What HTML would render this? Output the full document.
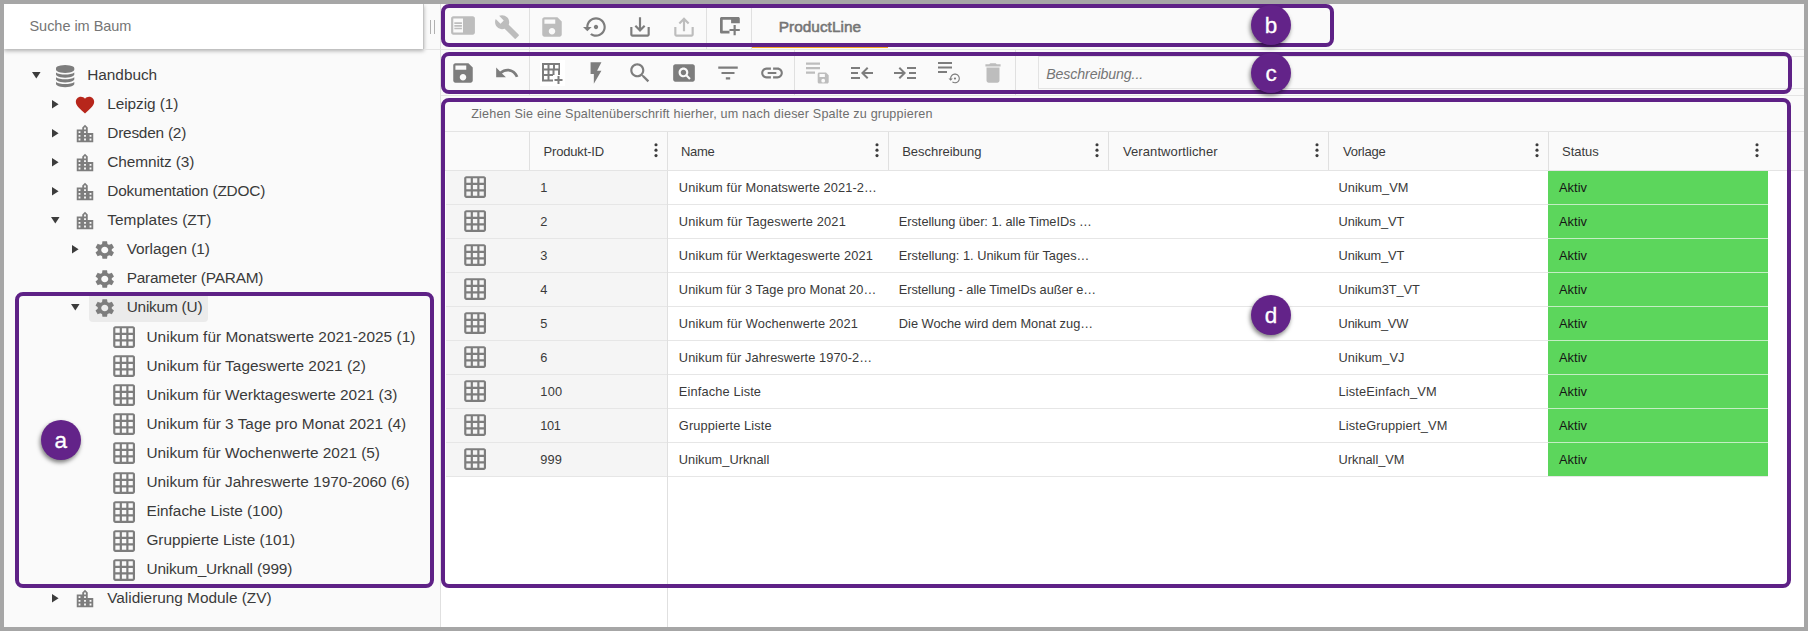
<!DOCTYPE html>
<html lang="de"><head><meta charset="utf-8"><title>ProductLine</title>
<style>
*{box-sizing:border-box;margin:0;padding:0}
html,body{width:1808px;height:631px;overflow:hidden;background:#a6a6a6}
body{font-family:"Liberation Sans",sans-serif;color:#333;position:relative}
#app{position:absolute;left:4px;top:4px;width:1800px;height:623px;background:#fafafa;overflow:hidden}
.abs,.ic,.t{position:absolute}
.ic{display:block;overflow:visible}
.t{white-space:nowrap;line-height:1}
.box{position:absolute;border:4px solid #5e2186;border-radius:8px}
.badge{position:absolute;width:40px;height:40px;border-radius:50%;background:#632389;color:#fff;font-size:22.5px;text-align:center;line-height:41px;box-shadow:-1px 2.5px 4px rgba(0,0,0,.5);-webkit-text-stroke:.3px #fff}
.hl{position:absolute;background:#e4e4e4;height:1px}
.vl{position:absolute;background:#e0e0e0;width:1px}
</style></head><body><div id="app">

<div class="vl" style="left:436px;top:0;height:623px"></div>
<div class="abs" style="left:0;top:0;width:420px;height:45px;background:#fff;box-shadow:0 2px 4px rgba(0,0,0,.3);border-right:1px solid #c4c4c4"></div>
<div class="t" id="search" style="left:25.46px;top:14.53px;font-size:14.5px;color:#757575;letter-spacing:-0.031px;">Suche im Baum</div>
<div class="abs" style="left:426px;top:16px;width:1px;height:13.5px;background:#b0b0b0"></div>
<div class="abs" style="left:430.3px;top:16px;width:1px;height:13.5px;background:#b0b0b0"></div>
<div class="abs" style="left:85.3px;top:288.5px;width:118.6px;height:29.3px;border-radius:4px;background:#ebebeb"></div>
<svg class="ic" style="left:27.5px;top:67.65px" width="8.6" height="6.6" viewBox="0 0 8.6 6.6"><path fill="#3c3c3c" d="M0 0h8.6L4.300 6.600z"/></svg>
<svg class="ic" style="left:51.8px;top:60.75px" width="18.3" height="22.2" viewBox="128 0 1536 1792" preserveAspectRatio="none"><path fill="#7d7d7d" d="M896 768q237 0 443-43t325-127v170q0 69-103 128t-280 93.500-385 34.500-385-34.500-280-93.500-103-128v-170q119 84 325 127t443 43zm0 768q237 0 443-43t325-127v170q0 69-103 128t-280 93.500-385 34.500-385-34.500-280-93.500-103-128v-170q119 84 325 127t443 43zm0-384q237 0 443-43t325-127v170q0 69-103 128t-280 93.500-385 34.500-385-34.500-280-93.500-103-128v-170q119 84 325 127t443 43zm0-1152q208 0 385 34.500t280 93.500 103 128v128q0 69-103 128t-280 93.500-385 34.500-385-34.500-280-93.500-103-128v-128q0-69 103-128t280-93.500 385-34.500z"/></svg>
<div class="t" id="tr0" style="left:83.24px;top:62.51px;font-size:15.4px;color:#3a3a3a;letter-spacing:-0.034px;">Handbuch</div>
<svg class="ic" style="left:48.3px;top:95.71px" width="6.6" height="8.6" viewBox="0 0 6.6 8.6"><path fill="#3c3c3c" d="M0 0v8.600L6.600 4.300z"/></svg>
<svg class="ic" style="left:69.9px;top:89.71px" width="22" height="22" viewBox="0 0 24 24"><path fill="#b7261b" d="M12 21.35l-1.45-1.32C5.4 15.36 2 12.28 2 8.5 2 5.42 4.42 3 7.5 3c1.74 0 3.41.81 4.5 2.09C13.09 3.81 14.76 3 16.5 3 19.58 3 22 5.42 22 8.5c0 3.78-3.4 6.86-8.55 11.54L12 21.35z"/></svg>
<div class="t" id="tr1" style="left:103.24px;top:91.57px;font-size:15.4px;color:#3a3a3a;letter-spacing:-0.079px;">Leipzig (1)</div>
<svg class="ic" style="left:48.3px;top:124.77px" width="6.6" height="8.6" viewBox="0 0 6.6 8.6"><path fill="#3c3c3c" d="M0 0v8.600L6.600 4.300z"/></svg>
<svg class="ic" style="left:70.05px;top:118.77px" width="22" height="22" viewBox="0 0 24 24"><path fill="#7d7d7d" d="M15 11V5l-3-3-3 3v2H3v14h18V11h-6zm-8 8H5v-2h2v2zm0-4H5v-2h2v2zm0-4H5V9h2v2zm6 8h-2v-2h2v2zm0-4h-2v-2h2v2zm0-4h-2V9h2v2zm0-4h-2V5h2v2zm6 12h-2v-2h2v2zm0-4h-2v-2h2v2z"/></svg>
<div class="t" id="tr2" style="left:103.24px;top:120.63px;font-size:15.4px;color:#3a3a3a;letter-spacing:-0.216px;">Dresden (2)</div>
<svg class="ic" style="left:48.3px;top:153.83px" width="6.6" height="8.6" viewBox="0 0 6.6 8.6"><path fill="#3c3c3c" d="M0 0v8.600L6.600 4.300z"/></svg>
<svg class="ic" style="left:70.05px;top:147.83px" width="22" height="22" viewBox="0 0 24 24"><path fill="#7d7d7d" d="M15 11V5l-3-3-3 3v2H3v14h18V11h-6zm-8 8H5v-2h2v2zm0-4H5v-2h2v2zm0-4H5V9h2v2zm6 8h-2v-2h2v2zm0-4h-2v-2h2v2zm0-4h-2V9h2v2zm0-4h-2V5h2v2zm6 12h-2v-2h2v2zm0-4h-2v-2h2v2z"/></svg>
<div class="t" id="tr3" style="left:103.24px;top:149.69px;font-size:15.4px;color:#3a3a3a;letter-spacing:-0.085px;">Chemnitz (3)</div>
<svg class="ic" style="left:48.3px;top:182.89px" width="6.6" height="8.6" viewBox="0 0 6.6 8.6"><path fill="#3c3c3c" d="M0 0v8.600L6.600 4.300z"/></svg>
<svg class="ic" style="left:70.05px;top:176.89px" width="22" height="22" viewBox="0 0 24 24"><path fill="#7d7d7d" d="M15 11V5l-3-3-3 3v2H3v14h18V11h-6zm-8 8H5v-2h2v2zm0-4H5v-2h2v2zm0-4H5V9h2v2zm6 8h-2v-2h2v2zm0-4h-2v-2h2v2zm0-4h-2V9h2v2zm0-4h-2V5h2v2zm6 12h-2v-2h2v2zm0-4h-2v-2h2v2z"/></svg>
<div class="t" id="tr4" style="left:103.24px;top:178.75px;font-size:15.4px;color:#3a3a3a;letter-spacing:-0.184px;">Dokumentation (ZDOC)</div>
<svg class="ic" style="left:47.3px;top:212.95px" width="8.6" height="6.6" viewBox="0 0 8.6 6.6"><path fill="#3c3c3c" d="M0 0h8.6L4.300 6.600z"/></svg>
<svg class="ic" style="left:70.05px;top:205.95px" width="22" height="22" viewBox="0 0 24 24"><path fill="#7d7d7d" d="M15 11V5l-3-3-3 3v2H3v14h18V11h-6zm-8 8H5v-2h2v2zm0-4H5v-2h2v2zm0-4H5V9h2v2zm6 8h-2v-2h2v2zm0-4h-2v-2h2v2zm0-4h-2V9h2v2zm0-4h-2V5h2v2zm6 12h-2v-2h2v2zm0-4h-2v-2h2v2z"/></svg>
<div class="t" id="tr5" style="left:103.24px;top:207.81px;font-size:15.4px;color:#3a3a3a;letter-spacing:0.048px;">Templates (ZT)</div>
<svg class="ic" style="left:68.2px;top:241.01px" width="6.6" height="8.6" viewBox="0 0 6.6 8.6"><path fill="#3c3c3c" d="M0 0v8.600L6.600 4.300z"/></svg>
<svg class="ic" style="left:89.15px;top:235.01px" width="23.500" height="22" viewBox="0 0 24 24" preserveAspectRatio="none"><path fill="#7d7d7d" d="M19.14 12.94c.04-.3.06-.61.06-.94 0-.32-.02-.64-.07-.94l2.030-1.580c.18-.14.23-.41.12-.61l-1.920-3.320c-.12-.22-.37-.29-.59-.22l-2.390.96c-.5-.38-1.030-.7-1.620-.94l-.36-2.540c-.04-.24-.24-.41-.48-.41h-3.840c-.24 0-.43.17-.47.41l-.36 2.540c-.59.24-1.130.57-1.620.94l-2.390-.96c-.22-.08-.47 0-.59.22L2.740 8.870c-.12.21-.08.47.12.61l2.030 1.580c-.05.3-.09.63-.09.94s.02.64.07.94l-2.030 1.580c-.18.14-.23.41-.12.61l1.920 3.320c.12.22.37.29.59.22l2.390-.96c.5.38 1.030.7 1.620.94l.36 2.540c.05.24.24.41.48.41h3.840c.24 0 .44-.17.47-.41l.36-2.540c.59-.24 1.130-.56 1.620-.94l2.390.96c.22.08.47 0 .59-.22l1.920-3.320c.12-.22.07-.47-.12-.61l-2.010-1.580zM12 15.600c-1.980 0-3.600-1.620-3.600-3.600s1.620-3.600 3.600-3.600 3.600 1.620 3.600 3.600-1.620 3.600-3.600 3.600z"/></svg>
<div class="t" id="tr6" style="left:122.65px;top:236.87px;font-size:15.4px;color:#3a3a3a;letter-spacing:-0.053px;">Vorlagen (1)</div>
<svg class="ic" style="left:89.15px;top:264.07px" width="23.500" height="22" viewBox="0 0 24 24" preserveAspectRatio="none"><path fill="#7d7d7d" d="M19.14 12.94c.04-.3.06-.61.06-.94 0-.32-.02-.64-.07-.94l2.030-1.580c.18-.14.23-.41.12-.61l-1.920-3.320c-.12-.22-.37-.29-.59-.22l-2.390.96c-.5-.38-1.030-.7-1.620-.94l-.36-2.540c-.04-.24-.24-.41-.48-.41h-3.840c-.24 0-.43.17-.47.41l-.36 2.540c-.59.24-1.130.57-1.620.94l-2.390-.96c-.22-.08-.47 0-.59.22L2.740 8.870c-.12.21-.08.47.12.61l2.030 1.580c-.05.3-.09.63-.09.94s.02.64.07.94l-2.030 1.580c-.18.14-.23.41-.12.61l1.920 3.320c.12.22.37.29.59.22l2.390-.96c.5.38 1.030.7 1.620.94l.36 2.540c.05.24.24.41.48.41h3.840c.24 0 .44-.17.47-.41l.36-2.540c.59-.24 1.130-.56 1.620-.94l2.390.96c.22.08.47 0 .59-.22l1.920-3.320c.12-.22.07-.47-.12-.61l-2.010-1.580zM12 15.600c-1.980 0-3.600-1.620-3.600-3.600s1.620-3.600 3.600-3.600 3.600 1.620 3.600 3.600-1.620 3.600-3.600 3.600z"/></svg>
<div class="t" id="tr7" style="left:122.65px;top:265.93px;font-size:15.4px;color:#3a3a3a;letter-spacing:-0.196px;">Parameter (PARAM)</div>
<svg class="ic" style="left:67.2px;top:300.13px" width="8.6" height="6.6" viewBox="0 0 8.6 6.6"><path fill="#3c3c3c" d="M0 0h8.6L4.300 6.600z"/></svg>
<svg class="ic" style="left:89.15px;top:293.13px" width="23.500" height="22" viewBox="0 0 24 24" preserveAspectRatio="none"><path fill="#7d7d7d" d="M19.14 12.94c.04-.3.06-.61.06-.94 0-.32-.02-.64-.07-.94l2.030-1.580c.18-.14.23-.41.12-.61l-1.920-3.320c-.12-.22-.37-.29-.59-.22l-2.390.96c-.5-.38-1.030-.7-1.620-.94l-.36-2.540c-.04-.24-.24-.41-.48-.41h-3.840c-.24 0-.43.17-.47.41l-.36 2.540c-.59.24-1.130.57-1.620.94l-2.390-.96c-.22-.08-.47 0-.59.22L2.740 8.870c-.12.21-.08.47.12.61l2.030 1.580c-.05.3-.09.63-.09.94s.02.64.07.94l-2.030 1.580c-.18.14-.23.41-.12.61l1.920 3.320c.12.22.37.29.59.22l2.390-.96c.5.38 1.030.7 1.620.94l.36 2.540c.05.24.24.41.48.41h3.840c.24 0 .44-.17.47-.41l.36-2.540c.59-.24 1.130-.56 1.620-.94l2.390.96c.22.08.47 0 .59-.22l1.920-3.320c.12-.22.07-.47-.12-.61l-2.010-1.580zM12 15.600c-1.980 0-3.600-1.620-3.600-3.600s1.620-3.600 3.600-3.600 3.600 1.620 3.600 3.600-1.620 3.600-3.600 3.600z"/></svg>
<div class="t" id="tr8" style="left:122.65px;top:294.99px;font-size:15.4px;color:#3a3a3a;letter-spacing:-0.209px;">Unikum (U)</div>
<svg class="ic" style="left:106.9px;top:320.0px" width="26.2" height="26.2" viewBox="0 0 24 24"><path fill="#7d7d7d" d="M20 2H4c-1.1 0-2 .9-2 2v16c0 1.1.9 2 2 2h16c1.1 0 2-.9 2-2V4c0-1.1-.9-2-2-2zM8 20H4v-4h4v4zm0-6H4v-4h4v4zm0-6H4V4h4v4zm6 12h-4v-4h4v4zm0-6h-4v-4h4v4zm0-6h-4V4h4v4zm6 12h-4v-4h4v4zm0-6h-4v-4h4v4zm0-6h-4V4h4v4z"/></svg>
<div class="t" id="tr9" style="left:142.44px;top:324.81px;font-size:15.4px;color:#3a3a3a;letter-spacing:0.034px;">Unikum für Monatswerte 2021-2025 (1)</div>
<svg class="ic" style="left:106.9px;top:349.11px" width="26.2" height="26.2" viewBox="0 0 24 24"><path fill="#7d7d7d" d="M20 2H4c-1.1 0-2 .9-2 2v16c0 1.1.9 2 2 2h16c1.1 0 2-.9 2-2V4c0-1.1-.9-2-2-2zM8 20H4v-4h4v4zm0-6H4v-4h4v4zm0-6H4V4h4v4zm6 12h-4v-4h4v4zm0-6h-4v-4h4v4zm0-6h-4V4h4v4zm6 12h-4v-4h4v4zm0-6h-4v-4h4v4zm0-6h-4V4h4v4z"/></svg>
<div class="t" id="tr10" style="left:142.44px;top:353.81px;font-size:15.4px;color:#3a3a3a;letter-spacing:0.023px;">Unikum für Tageswerte 2021 (2)</div>
<svg class="ic" style="left:106.9px;top:378.22px" width="26.2" height="26.2" viewBox="0 0 24 24"><path fill="#7d7d7d" d="M20 2H4c-1.1 0-2 .9-2 2v16c0 1.1.9 2 2 2h16c1.1 0 2-.9 2-2V4c0-1.1-.9-2-2-2zM8 20H4v-4h4v4zm0-6H4v-4h4v4zm0-6H4V4h4v4zm6 12h-4v-4h4v4zm0-6h-4v-4h4v4zm0-6h-4V4h4v4zm6 12h-4v-4h4v4zm0-6h-4v-4h4v4zm0-6h-4V4h4v4z"/></svg>
<div class="t" id="tr11" style="left:142.44px;top:382.81px;font-size:15.4px;color:#3a3a3a;letter-spacing:-0.01px;">Unikum für Werktageswerte 2021 (3)</div>
<svg class="ic" style="left:106.9px;top:407.33px" width="26.2" height="26.2" viewBox="0 0 24 24"><path fill="#7d7d7d" d="M20 2H4c-1.1 0-2 .9-2 2v16c0 1.1.9 2 2 2h16c1.1 0 2-.9 2-2V4c0-1.1-.9-2-2-2zM8 20H4v-4h4v4zm0-6H4v-4h4v4zm0-6H4V4h4v4zm6 12h-4v-4h4v4zm0-6h-4v-4h4v4zm0-6h-4V4h4v4zm6 12h-4v-4h4v4zm0-6h-4v-4h4v4zm0-6h-4V4h4v4z"/></svg>
<div class="t" id="tr12" style="left:142.44px;top:411.81px;font-size:15.4px;color:#3a3a3a;letter-spacing:-0.0px;">Unikum für 3 Tage pro Monat 2021 (4)</div>
<svg class="ic" style="left:106.9px;top:436.44px" width="26.2" height="26.2" viewBox="0 0 24 24"><path fill="#7d7d7d" d="M20 2H4c-1.1 0-2 .9-2 2v16c0 1.1.9 2 2 2h16c1.1 0 2-.9 2-2V4c0-1.1-.9-2-2-2zM8 20H4v-4h4v4zm0-6H4v-4h4v4zm0-6H4V4h4v4zm6 12h-4v-4h4v4zm0-6h-4v-4h4v4zm0-6h-4V4h4v4zm6 12h-4v-4h4v4zm0-6h-4v-4h4v4zm0-6h-4V4h4v4z"/></svg>
<div class="t" id="tr13" style="left:142.44px;top:440.81px;font-size:15.4px;color:#3a3a3a;letter-spacing:-0.018px;">Unikum für Wochenwerte 2021 (5)</div>
<svg class="ic" style="left:106.9px;top:465.55px" width="26.2" height="26.2" viewBox="0 0 24 24"><path fill="#7d7d7d" d="M20 2H4c-1.1 0-2 .9-2 2v16c0 1.1.9 2 2 2h16c1.1 0 2-.9 2-2V4c0-1.1-.9-2-2-2zM8 20H4v-4h4v4zm0-6H4v-4h4v4zm0-6H4V4h4v4zm6 12h-4v-4h4v4zm0-6h-4v-4h4v4zm0-6h-4V4h4v4zm6 12h-4v-4h4v4zm0-6h-4v-4h4v4zm0-6h-4V4h4v4z"/></svg>
<div class="t" id="tr14" style="left:142.44px;top:469.81px;font-size:15.4px;color:#3a3a3a;letter-spacing:-0.005px;">Unikum für Jahreswerte 1970-2060 (6)</div>
<svg class="ic" style="left:106.9px;top:494.66px" width="26.2" height="26.2" viewBox="0 0 24 24"><path fill="#7d7d7d" d="M20 2H4c-1.1 0-2 .9-2 2v16c0 1.1.9 2 2 2h16c1.1 0 2-.9 2-2V4c0-1.1-.9-2-2-2zM8 20H4v-4h4v4zm0-6H4v-4h4v4zm0-6H4V4h4v4zm6 12h-4v-4h4v4zm0-6h-4v-4h4v4zm0-6h-4V4h4v4zm6 12h-4v-4h4v4zm0-6h-4v-4h4v4zm0-6h-4V4h4v4z"/></svg>
<div class="t" id="tr15" style="left:142.44px;top:498.81px;font-size:15.4px;color:#3a3a3a;letter-spacing:-0.025px;">Einfache Liste (100)</div>
<svg class="ic" style="left:106.9px;top:523.77px" width="26.2" height="26.2" viewBox="0 0 24 24"><path fill="#7d7d7d" d="M20 2H4c-1.1 0-2 .9-2 2v16c0 1.1.9 2 2 2h16c1.1 0 2-.9 2-2V4c0-1.1-.9-2-2-2zM8 20H4v-4h4v4zm0-6H4v-4h4v4zm0-6H4V4h4v4zm6 12h-4v-4h4v4zm0-6h-4v-4h4v4zm0-6h-4V4h4v4zm6 12h-4v-4h4v4zm0-6h-4v-4h4v4zm0-6h-4V4h4v4z"/></svg>
<div class="t" id="tr16" style="left:142.44px;top:527.81px;font-size:15.4px;color:#3a3a3a;letter-spacing:-0.044px;">Gruppierte Liste (101)</div>
<svg class="ic" style="left:106.9px;top:552.88px" width="26.2" height="26.2" viewBox="0 0 24 24"><path fill="#7d7d7d" d="M20 2H4c-1.1 0-2 .9-2 2v16c0 1.1.9 2 2 2h16c1.1 0 2-.9 2-2V4c0-1.1-.9-2-2-2zM8 20H4v-4h4v4zm0-6H4v-4h4v4zm0-6H4V4h4v4zm6 12h-4v-4h4v4zm0-6h-4v-4h4v4zm0-6h-4V4h4v4zm6 12h-4v-4h4v4zm0-6h-4v-4h4v4zm0-6h-4V4h4v4z"/></svg>
<div class="t" id="tr17" style="left:142.44px;top:556.81px;font-size:15.4px;color:#3a3a3a;letter-spacing:-0.155px;">Unikum_Urknall (999)</div>
<svg class="ic" style="left:48.3px;top:589.95px" width="6.6" height="8.6" viewBox="0 0 6.6 8.6"><path fill="#3c3c3c" d="M0 0v8.600L6.600 4.300z"/></svg>
<svg class="ic" style="left:70.05px;top:583.95px" width="22" height="22" viewBox="0 0 24 24"><path fill="#7d7d7d" d="M15 11V5l-3-3-3 3v2H3v14h18V11h-6zm-8 8H5v-2h2v2zm0-4H5v-2h2v2zm0-4H5V9h2v2zm6 8h-2v-2h2v2zm0-4h-2v-2h2v2zm0-4h-2V9h2v2zm0-4h-2V5h2v2zm6 12h-2v-2h2v2zm0-4h-2v-2h2v2z"/></svg>
<div class="t" id="tr18" style="left:103.24px;top:585.81px;font-size:15.4px;color:#3a3a3a;letter-spacing:-0.021px;">Validierung Module (ZV)</div>
<div class="hl" style="left:420px;top:45px;width:1380px"></div>
<div class="hl" style="left:437px;top:91px;width:1363px"></div>
<svg class="ic" style="left:445.5px;top:7.6px" width="26" height="26" viewBox="0 0 24 24"><path fill="#bdbdbd" d="M3 4h18c1.1 0 2 .9 2 2v13c0 1.1-.9 2-2 2H3c-1.1 0-2-.9-2-2V6c0-1.1.9-2 2-2zm0 15h9V6H3v13zM4 9.5h7V11H4zm0 2.5h7v1.5H4zm0 2.5h7V16H4z"/></svg>
<svg class="ic" style="left:490.0px;top:9.8px" width="26" height="26" viewBox="0 0 24 24"><path fill="#bdbdbd" d="M22.7 19l-9.1-9.1c.9-2.3.4-5-1.5-6.9-2-2-5-2.4-7.4-1.3L9 6 6 9 1.6 4.7C.4 7.1.9 10.1 2.9 12.1c1.9 1.9 4.6 2.4 6.9 1.5l9.1 9.1c.4.4 1 .4 1.4 0l2.3-2.3c.5-.4.5-1.1.1-1.4z"/></svg>
<svg class="ic" style="left:534.5px;top:10.0px" width="26" height="26" viewBox="0 0 24 24"><path fill="#bdbdbd" d="M17 3H5c-1.11 0-2 .9-2 2v14c0 1.1.89 2 2 2h14c1.1 0 2-.9 2-2V7l-4-4zm-5 16c-1.66 0-3-1.34-3-3s1.34-3 3-3 3 1.34 3 3-1.34 3-3 3zm3-10H5V5h10v4z"/></svg>
<svg class="ic" style="left:578.9px;top:10.0px" width="26" height="26" viewBox="0 0 24 24"><path fill="#7d7d7d" d="M14 12c0-1.1-.9-2-2-2s-2 .9-2 2 .9 2 2 2 2-.9 2-2zm-2-9c-4.97 0-9 4.03-9 9H0l4 4 4-4H5c0-3.87 3.13-7 7-7s7 3.13 7 7-3.13 7-7 7c-1.51 0-2.91-.49-4.06-1.3l-1.42 1.44C8.04 20.3 9.94 21 12 21c4.97 0 9-4.03 9-9s-4.03-9-9-9z"/></svg>
<svg class="ic" style="left:622.5px;top:10.0px" width="26" height="26" viewBox="0 0 24 24"><path fill="#7d7d7d" d="M19 12v7H5v-7H3v7c0 1.1.9 2 2 2h14c1.1 0 2-.9 2-2v-7h-2zm-6 .67l2.59-2.58L17 11.5l-5 5-5-5 1.41-1.41L11 12.67V3h2z"/></svg>
<svg class="ic" style="left:667.0px;top:10.0px" width="26" height="26" viewBox="0 0 24 24"><path fill="#bdbdbd" d="M19 12v7H5v-7H3v7c0 1.1.9 2 2 2h14c1.1 0 2-.9 2-2v-7h-2zM11 6.83L8.41 9.41 7 8l5-5 5 5-1.41 1.41L13 6.83V16h-2z"/></svg>
<svg class="ic" style="left:716.2px;top:13.1px" width="20" height="18.400" viewBox="0 0 20 18.400"><path fill="#7d7d7d" d="M1.600 0h16.600c.9 0 1.600.7 1.600 1.600v4.700h-8.700V2.700H2.700v11.100h6.800v2.700H1.600c-.9 0-1.600-.7-1.600-1.600V1.600C0 .7.700 0 1.600 0zM13.550 8h2.200v3.900h4.050v2.200h-4.050v4.100h-2.200v-4.100H9.500v-2.200h4.050z"/></svg>
<div class="vl" style="left:525px;top:0px;height:45px"></div>
<div class="vl" style="left:702px;top:0px;height:45px"></div>
<div class="vl" style="left:747px;top:0px;height:45px"></div>
<div class="t" id="tab" style="left:774.69px;top:14.66px;font-size:15.4px;color:#757575;letter-spacing:0.026px;-webkit-text-stroke:0.55px #757575;">ProductLine</div>
<div class="abs" style="left:748px;top:42.5px;width:136px;height:1.8px;background:#f5a623"></div>
<svg class="ic" style="left:446.0px;top:56.0px" width="26" height="26" viewBox="0 0 24 24"><path fill="#7d7d7d" d="M17 3H5c-1.11 0-2 .9-2 2v14c0 1.1.89 2 2 2h14c1.1 0 2-.9 2-2V7l-4-4zm-5 16c-1.66 0-3-1.34-3-3s1.34-3 3-3 3 1.34 3 3-1.34 3-3 3zm3-10H5V5h10v4z"/></svg>
<svg class="ic" style="left:490.0px;top:56.0px" width="26" height="26" viewBox="0 0 24 24"><path fill="#7d7d7d" d="M12.5 8c-2.65 0-5.05.99-6.9 2.6L2 7v9h9l-3.62-3.62c1.39-1.16 3.16-1.88 5.12-1.88 3.54 0 6.55 2.31 7.6 5.5l2.37-.78C21.08 11.03 17.15 8 12.5 8z"/></svg>
<div class="abs" style="left:536px;top:56px;width:25px;height:26px;background:#fff"></div>
<svg class="ic" style="left:538px;top:58.5px" width="22" height="22" viewBox="0 0 22 22"><path fill="#7d7d7d" d="M0 0h18v12h-2V7.500h-3.500V12h-2V7.500H7.500V11H11v2H7.500v3.500H11v2H0zM2 2v3.500h3.500V2zm5.500 0v3.500H11V2zm5.500 0v3.500h3.500V2zM2 7.500V11h3.500V7.500zM2 13v3.500h3.500V13zM15.500 13h2v3h3v2h-3v3h-2v-3h-3v-2h3z"/></svg>
<svg class="ic" style="left:578.5px;top:56.0px" width="26" height="26" viewBox="0 0 24 24"><path fill="#7d7d7d" d="M7 2v11h3v9l7-12h-4l4-8z"/></svg>
<svg class="ic" style="left:622.5px;top:56.0px" width="26" height="26" viewBox="0 0 24 24"><path fill="#7d7d7d" d="M15.5 14h-.79l-.28-.27C15.41 12.59 16 11.11 16 9.5 16 5.91 13.09 3 9.5 3S3 5.91 3 9.5 5.91 16 9.5 16c1.61 0 3.09-.59 4.23-1.57l.27.28v.79l5 4.99L20.49 19l-4.99-5zm-6 0C7.01 14 5 11.99 5 9.5S7.01 5 9.5 5 14 7.01 14 9.5 11.99 14 9.5 14z"/></svg>
<svg class="ic" style="left:667.0px;top:56.0px" width="26" height="26" viewBox="0 0 24 24"><path fill="#7d7d7d" d="M11.5 9C10.12 9 9 10.12 9 11.5s1.12 2.5 2.5 2.5 2.5-1.12 2.5-2.5S12.88 9 11.5 9zM20 4H4c-1.1 0-2 .9-2 2v12c0 1.1.9 2 2 2h16c1.1 0 2-.9 2-2V6c0-1.1-.9-2-2-2zm-3.21 14.21l-2.91-2.91c-.69.44-1.51.7-2.39.7C9.01 16 7 13.99 7 11.5S9.01 7 11.5 7 16 9.01 16 11.5c0 .88-.26 1.69-.7 2.39l2.91 2.9-1.42 1.42z"/></svg>
<svg class="ic" style="left:710.5px;top:56.0px" width="26" height="26" viewBox="0 0 24 24"><path fill="#7d7d7d" d="M10 18h4v-2h-4v2zM3 6v2h18V6H3zm3 7h12v-2H6v2z"/></svg>
<svg class="ic" style="left:754.5px;top:56.0px" width="26" height="26" viewBox="0 0 24 24"><path fill="#7d7d7d" d="M3.9 12c0-1.71 1.39-3.1 3.1-3.1h4V7H7c-2.76 0-5 2.24-5 5s2.24 5 5 5h4v-1.9H7c-1.71 0-3.1-1.39-3.1-3.1zM8 13h8v-2H8v2zm9-6h-4v1.9h4c1.71 0 3.1 1.39 3.1 3.1s-1.39 3.1-3.1 3.1h-4V17h4c2.76 0 5-2.24 5-5s-2.24-5-5-5z"/></svg>
<div class="vl" style="left:525px;top:46px;height:45px"></div>
<div class="vl" style="left:790px;top:46px;height:45px"></div>
<div class="vl" style="left:1011px;top:46px;height:45px"></div>
<svg class="ic" style="left:801px;top:57px" width="26" height="24" viewBox="0 0 26 24"><path fill="#bdbdbd" d="M1 1.500h14v2.200H1zm0 4.500h14v2.200H1zm0 4.500h9v2.200H1zM14.200 11.600h6.800l2.700 2.700v6.800c0 .8-.7 1.500-1.500 1.500h-8c-.8 0-1.500-.7-1.500-1.500v-8c0-.8.700-1.500 1.500-1.500zm.300 1.500v2.800h5.400v-2.800zm3.700 4.700a1.900 1.900 0 100 3.800 1.900 1.900 0 000-3.800z"/></svg>
<svg class="ic" style="left:846px;top:61px" width="24" height="16" viewBox="0 0 24 16"><path fill="#7d7d7d" d="M1 2h9v2H1zm0 5h7v2H1zm0 5h9v2H1zM23 7H14.800l3.600-3.600L17 2l-6 6 6 6 1.400-1.400L14.800 9H23z"/></svg>
<svg class="ic" style="left:889px;top:61px" width="24" height="16" viewBox="0 0 24 16"><path fill="#7d7d7d" d="M14 2h9v2h-9zm2 5h7v2h-7zm-2 5h9v2h-9zM1 7h8.200L5.600 3.400 7 2l6 6-6 6-1.400-1.400L9.200 9H1z"/></svg>
<svg class="ic" style="left:933px;top:57px" width="26" height="24" viewBox="0 0 26 24"><path fill="#7d7d7d" d="M1 1h14v2H1zm0 4.500h14v2H1zm0 4.500h9v2H1z"/><g transform="translate(11.500,11) scale(0.54)"><path fill="#7d7d7d" d="M14 12c0-1.1-.9-2-2-2s-2 .9-2 2 .9 2 2 2 2-.9 2-2zm-2-9c-4.97 0-9 4.03-9 9H0l4 4 4-4H5c0-3.87 3.13-7 7-7s7 3.13 7 7-3.13 7-7 7c-1.51 0-2.91-.49-4.06-1.3l-1.42 1.44C8.04 20.3 9.94 21 12 21c4.97 0 9-4.03 9-9s-4.03-9-9-9z"/></g></svg>
<svg class="ic" style="left:975.5px;top:56.0px" width="26" height="26" viewBox="0 0 24 24"><path fill="#bdbdbd" d="M6 19c0 1.1.9 2 2 2h8c1.1 0 2-.9 2-2V7H6v12zM19 4h-3.5l-1-1h-5l-1 1H5v2h14V4z"/></svg>
<div class="abs" style="left:1034px;top:52px;width:780px;height:33px;border:1px solid #e3e3e3;background:#fafafa"></div>
<div class="t" id="desc" style="left:1042.13px;top:62.78px;font-size:14.2px;color:#757575;letter-spacing:-0.107px;font-style:italic;">Beschreibung...</div>
<div class="t" id="hint" style="left:467.22px;top:104.23px;font-size:12.6px;color:#6e6e6e;letter-spacing:0.178px;">Ziehen Sie eine Spaltenüberschrift hierher, um nach dieser Spalte zu gruppieren</div>
<div class="hl" style="left:437px;top:127px;width:1363px"></div>
<div class="hl" style="left:437px;top:166px;width:1363px"></div>
<div class="abs" style="left:437px;top:167px;width:1363px;height:456px;background:#fff"></div>
<div class="vl" style="left:525px;top:128px;height:38px"></div>
<div class="t" id="h1" style="left:539.5px;top:140.9px;font-size:13px;color:#3a3a3a;letter-spacing:-0.164px;">Produkt-ID</div>
<svg class="ic" style="left:649.8px;top:138.9px" width="4" height="14.300" viewBox="0 0 4 14.300"><g fill="#3c3c3c"><circle cx="2" cy="1.700" r="1.550"/><circle cx="2" cy="7.150" r="1.550"/><circle cx="2" cy="12.600" r="1.550"/></g></svg>
<div class="vl" style="left:663px;top:128px;height:38px"></div>
<div class="t" id="h2" style="left:676.96px;top:140.9px;font-size:13px;color:#3a3a3a;letter-spacing:-0.26px;">Name</div>
<svg class="ic" style="left:870.8px;top:138.9px" width="4" height="14.300" viewBox="0 0 4 14.300"><g fill="#3c3c3c"><circle cx="2" cy="1.700" r="1.550"/><circle cx="2" cy="7.150" r="1.550"/><circle cx="2" cy="12.600" r="1.550"/></g></svg>
<div class="vl" style="left:884px;top:128px;height:38px"></div>
<div class="t" id="h3" style="left:898.17px;top:140.9px;font-size:13px;color:#3a3a3a;letter-spacing:-0.022px;">Beschreibung</div>
<svg class="ic" style="left:1090.8px;top:138.9px" width="4" height="14.300" viewBox="0 0 4 14.300"><g fill="#3c3c3c"><circle cx="2" cy="1.700" r="1.550"/><circle cx="2" cy="7.150" r="1.550"/><circle cx="2" cy="12.600" r="1.550"/></g></svg>
<div class="vl" style="left:1104px;top:128px;height:38px"></div>
<div class="t" id="h4" style="left:1118.96px;top:140.9px;font-size:13px;color:#3a3a3a;letter-spacing:0.091px;">Verantwortlicher</div>
<svg class="ic" style="left:1310.8px;top:138.9px" width="4" height="14.300" viewBox="0 0 4 14.300"><g fill="#3c3c3c"><circle cx="2" cy="1.700" r="1.550"/><circle cx="2" cy="7.150" r="1.550"/><circle cx="2" cy="12.600" r="1.550"/></g></svg>
<div class="vl" style="left:1324px;top:128px;height:38px"></div>
<div class="t" id="h5" style="left:1338.96px;top:140.9px;font-size:13px;color:#3a3a3a;letter-spacing:-0.205px;">Vorlage</div>
<svg class="ic" style="left:1530.8px;top:138.9px" width="4" height="14.300" viewBox="0 0 4 14.300"><g fill="#3c3c3c"><circle cx="2" cy="1.700" r="1.550"/><circle cx="2" cy="7.150" r="1.550"/><circle cx="2" cy="12.600" r="1.550"/></g></svg>
<div class="vl" style="left:1544px;top:128px;height:38px"></div>
<div class="t" id="h6" style="left:1558.06px;top:140.9px;font-size:13px;color:#3a3a3a;letter-spacing:-0.04px;">Status</div>
<svg class="ic" style="left:1750.8px;top:138.9px" width="4" height="14.300" viewBox="0 0 4 14.300"><g fill="#3c3c3c"><circle cx="2" cy="1.700" r="1.550"/><circle cx="2" cy="7.150" r="1.550"/><circle cx="2" cy="12.600" r="1.550"/></g></svg>
<div class="abs" style="left:442px;top:167px;width:221px;height:33px;background:#f5f5f5"></div>
<div class="abs" style="left:1544px;top:167px;width:220px;height:33px;background:#5cd65c"></div>
<div class="hl" style="left:442px;top:200px;width:1322px;background:#e6e6e6"></div>
<div class="hl" style="left:1544px;top:200px;width:220px;background:#c4eec4"></div>
<svg class="ic" style="left:457.95px;top:169.6px" width="26.2" height="26.2" viewBox="0 0 24 24"><path fill="#7d7d7d" d="M20 2H4c-1.1 0-2 .9-2 2v16c0 1.1.9 2 2 2h16c1.1 0 2-.9 2-2V4c0-1.1-.9-2-2-2zM8 20H4v-4h4v4zm0-6H4v-4h4v4zm0-6H4V4h4v4zm6 12h-4v-4h4v4zm0-6h-4v-4h4v4zm0-6h-4V4h4v4zm6 12h-4v-4h4v4zm0-6h-4v-4h4v4zm0-6h-4V4h4v4z"/></svg>
<div class="t" id="p0" style="left:536.3px;top:178.16px;font-size:12.8px;color:#3a3a3a;">1</div>
<div class="t" id="n0" style="left:674.86px;top:178.16px;font-size:12.8px;color:#3a3a3a;letter-spacing:0.107px;">Unikum für Monatswerte 2021-2…</div>
<div class="t" id="v0" style="left:1334.59px;top:178.16px;font-size:12.8px;color:#3a3a3a;letter-spacing:0.024px;">Unikum_VM</div>
<div class="t" id="s0" style="left:1554.89px;top:178.16px;font-size:12.8px;color:#151515;letter-spacing:0.101px;">Aktiv</div>
<div class="abs" style="left:442px;top:201px;width:221px;height:33px;background:#f5f5f5"></div>
<div class="abs" style="left:1544px;top:201px;width:220px;height:33px;background:#5cd65c"></div>
<div class="hl" style="left:442px;top:234px;width:1322px;background:#e6e6e6"></div>
<div class="hl" style="left:1544px;top:234px;width:220px;background:#c4eec4"></div>
<svg class="ic" style="left:457.95px;top:203.6px" width="26.2" height="26.2" viewBox="0 0 24 24"><path fill="#7d7d7d" d="M20 2H4c-1.1 0-2 .9-2 2v16c0 1.1.9 2 2 2h16c1.1 0 2-.9 2-2V4c0-1.1-.9-2-2-2zM8 20H4v-4h4v4zm0-6H4v-4h4v4zm0-6H4V4h4v4zm6 12h-4v-4h4v4zm0-6h-4v-4h4v4zm0-6h-4V4h4v4zm6 12h-4v-4h4v4zm0-6h-4v-4h4v4zm0-6h-4V4h4v4z"/></svg>
<div class="t" id="p1" style="left:536.3px;top:212.16px;font-size:12.8px;color:#3a3a3a;">2</div>
<div class="t" id="n1" style="left:674.86px;top:212.16px;font-size:12.8px;color:#3a3a3a;letter-spacing:0.17px;">Unikum für Tageswerte 2021</div>
<div class="t" id="d1" style="left:894.77px;top:212.16px;font-size:12.8px;color:#3a3a3a;letter-spacing:-0.032px;">Erstellung über: 1. alle TimeIDs …</div>
<div class="t" id="v1" style="left:1334.59px;top:212.16px;font-size:12.8px;color:#3a3a3a;letter-spacing:-0.142px;">Unikum_VT</div>
<div class="t" id="s1" style="left:1554.89px;top:212.16px;font-size:12.8px;color:#151515;letter-spacing:0.101px;">Aktiv</div>
<div class="abs" style="left:442px;top:235px;width:221px;height:33px;background:#f5f5f5"></div>
<div class="abs" style="left:1544px;top:235px;width:220px;height:33px;background:#5cd65c"></div>
<div class="hl" style="left:442px;top:268px;width:1322px;background:#e6e6e6"></div>
<div class="hl" style="left:1544px;top:268px;width:220px;background:#c4eec4"></div>
<svg class="ic" style="left:457.95px;top:237.6px" width="26.2" height="26.2" viewBox="0 0 24 24"><path fill="#7d7d7d" d="M20 2H4c-1.1 0-2 .9-2 2v16c0 1.1.9 2 2 2h16c1.1 0 2-.9 2-2V4c0-1.1-.9-2-2-2zM8 20H4v-4h4v4zm0-6H4v-4h4v4zm0-6H4V4h4v4zm6 12h-4v-4h4v4zm0-6h-4v-4h4v4zm0-6h-4V4h4v4zm6 12h-4v-4h4v4zm0-6h-4v-4h4v4zm0-6h-4V4h4v4z"/></svg>
<div class="t" id="p2" style="left:536.3px;top:246.16px;font-size:12.8px;color:#3a3a3a;">3</div>
<div class="t" id="n2" style="left:674.86px;top:246.16px;font-size:12.8px;color:#3a3a3a;letter-spacing:0.152px;">Unikum für Werktageswerte 2021</div>
<div class="t" id="d2" style="left:894.77px;top:246.16px;font-size:12.8px;color:#3a3a3a;letter-spacing:0.008px;">Erstellung: 1. Unikum für Tages…</div>
<div class="t" id="v2" style="left:1334.59px;top:246.16px;font-size:12.8px;color:#3a3a3a;letter-spacing:-0.142px;">Unikum_VT</div>
<div class="t" id="s2" style="left:1554.89px;top:246.16px;font-size:12.8px;color:#151515;letter-spacing:0.101px;">Aktiv</div>
<div class="abs" style="left:442px;top:269px;width:221px;height:33px;background:#f5f5f5"></div>
<div class="abs" style="left:1544px;top:269px;width:220px;height:33px;background:#5cd65c"></div>
<div class="hl" style="left:442px;top:302px;width:1322px;background:#e6e6e6"></div>
<div class="hl" style="left:1544px;top:302px;width:220px;background:#c4eec4"></div>
<svg class="ic" style="left:457.95px;top:271.6px" width="26.2" height="26.2" viewBox="0 0 24 24"><path fill="#7d7d7d" d="M20 2H4c-1.1 0-2 .9-2 2v16c0 1.1.9 2 2 2h16c1.1 0 2-.9 2-2V4c0-1.1-.9-2-2-2zM8 20H4v-4h4v4zm0-6H4v-4h4v4zm0-6H4V4h4v4zm6 12h-4v-4h4v4zm0-6h-4v-4h4v4zm0-6h-4V4h4v4zm6 12h-4v-4h4v4zm0-6h-4v-4h4v4zm0-6h-4V4h4v4z"/></svg>
<div class="t" id="p3" style="left:536.3px;top:280.16px;font-size:12.8px;color:#3a3a3a;">4</div>
<div class="t" id="n3" style="left:674.86px;top:280.16px;font-size:12.8px;color:#3a3a3a;letter-spacing:0.067px;">Unikum für 3 Tage pro Monat 20…</div>
<div class="t" id="d3" style="left:894.77px;top:280.16px;font-size:12.8px;color:#3a3a3a;letter-spacing:-0.055px;">Erstellung - alle TimeIDs außer e…</div>
<div class="t" id="v3" style="left:1334.59px;top:280.16px;font-size:12.8px;color:#3a3a3a;letter-spacing:-0.054px;">Unikum3T_VT</div>
<div class="t" id="s3" style="left:1554.89px;top:280.16px;font-size:12.8px;color:#151515;letter-spacing:0.101px;">Aktiv</div>
<div class="abs" style="left:442px;top:303px;width:221px;height:33px;background:#f5f5f5"></div>
<div class="abs" style="left:1544px;top:303px;width:220px;height:33px;background:#5cd65c"></div>
<div class="hl" style="left:442px;top:336px;width:1322px;background:#e6e6e6"></div>
<div class="hl" style="left:1544px;top:336px;width:220px;background:#c4eec4"></div>
<svg class="ic" style="left:457.95px;top:305.6px" width="26.2" height="26.2" viewBox="0 0 24 24"><path fill="#7d7d7d" d="M20 2H4c-1.1 0-2 .9-2 2v16c0 1.1.9 2 2 2h16c1.1 0 2-.9 2-2V4c0-1.1-.9-2-2-2zM8 20H4v-4h4v4zm0-6H4v-4h4v4zm0-6H4V4h4v4zm6 12h-4v-4h4v4zm0-6h-4v-4h4v4zm0-6h-4V4h4v4zm6 12h-4v-4h4v4zm0-6h-4v-4h4v4zm0-6h-4V4h4v4z"/></svg>
<div class="t" id="p4" style="left:536.3px;top:314.16px;font-size:12.8px;color:#3a3a3a;">5</div>
<div class="t" id="n4" style="left:674.86px;top:314.16px;font-size:12.8px;color:#3a3a3a;letter-spacing:0.137px;">Unikum für Wochenwerte 2021</div>
<div class="t" id="d4" style="left:894.77px;top:314.16px;font-size:12.8px;color:#3a3a3a;letter-spacing:0.013px;">Die Woche wird dem Monat zug…</div>
<div class="t" id="v4" style="left:1334.59px;top:314.16px;font-size:12.8px;color:#3a3a3a;letter-spacing:-0.173px;">Unikum_VW</div>
<div class="t" id="s4" style="left:1554.89px;top:314.16px;font-size:12.8px;color:#151515;letter-spacing:0.101px;">Aktiv</div>
<div class="abs" style="left:442px;top:337px;width:221px;height:33px;background:#f5f5f5"></div>
<div class="abs" style="left:1544px;top:337px;width:220px;height:33px;background:#5cd65c"></div>
<div class="hl" style="left:442px;top:370px;width:1322px;background:#e6e6e6"></div>
<div class="hl" style="left:1544px;top:370px;width:220px;background:#c4eec4"></div>
<svg class="ic" style="left:457.95px;top:339.6px" width="26.2" height="26.2" viewBox="0 0 24 24"><path fill="#7d7d7d" d="M20 2H4c-1.1 0-2 .9-2 2v16c0 1.1.9 2 2 2h16c1.1 0 2-.9 2-2V4c0-1.1-.9-2-2-2zM8 20H4v-4h4v4zm0-6H4v-4h4v4zm0-6H4V4h4v4zm6 12h-4v-4h4v4zm0-6h-4v-4h4v4zm0-6h-4V4h4v4zm6 12h-4v-4h4v4zm0-6h-4v-4h4v4zm0-6h-4V4h4v4z"/></svg>
<div class="t" id="p5" style="left:536.3px;top:348.16px;font-size:12.8px;color:#3a3a3a;">6</div>
<div class="t" id="n5" style="left:674.86px;top:348.16px;font-size:12.8px;color:#3a3a3a;letter-spacing:0.065px;">Unikum für Jahreswerte 1970-2…</div>
<div class="t" id="v5" style="left:1334.59px;top:348.16px;font-size:12.8px;color:#3a3a3a;letter-spacing:0.053px;">Unikum_VJ</div>
<div class="t" id="s5" style="left:1554.89px;top:348.16px;font-size:12.8px;color:#151515;letter-spacing:0.101px;">Aktiv</div>
<div class="abs" style="left:442px;top:371px;width:221px;height:33px;background:#f5f5f5"></div>
<div class="abs" style="left:1544px;top:371px;width:220px;height:33px;background:#5cd65c"></div>
<div class="hl" style="left:442px;top:404px;width:1322px;background:#e6e6e6"></div>
<div class="hl" style="left:1544px;top:404px;width:220px;background:#c4eec4"></div>
<svg class="ic" style="left:457.95px;top:373.6px" width="26.2" height="26.2" viewBox="0 0 24 24"><path fill="#7d7d7d" d="M20 2H4c-1.1 0-2 .9-2 2v16c0 1.1.9 2 2 2h16c1.1 0 2-.9 2-2V4c0-1.1-.9-2-2-2zM8 20H4v-4h4v4zm0-6H4v-4h4v4zm0-6H4V4h4v4zm6 12h-4v-4h4v4zm0-6h-4v-4h4v4zm0-6h-4V4h4v4zm6 12h-4v-4h4v4zm0-6h-4v-4h4v4zm0-6h-4V4h4v4z"/></svg>
<div class="t" id="p6" style="left:536.3px;top:382.16px;font-size:12.8px;color:#3a3a3a;letter-spacing:0.221px;">100</div>
<div class="t" id="n6" style="left:674.86px;top:382.16px;font-size:12.8px;color:#3a3a3a;letter-spacing:0.133px;">Einfache Liste</div>
<div class="t" id="v6" style="left:1334.59px;top:382.16px;font-size:12.8px;color:#3a3a3a;letter-spacing:0.14px;">ListeEinfach_VM</div>
<div class="t" id="s6" style="left:1554.89px;top:382.16px;font-size:12.8px;color:#151515;letter-spacing:0.101px;">Aktiv</div>
<div class="abs" style="left:442px;top:405px;width:221px;height:33px;background:#f5f5f5"></div>
<div class="abs" style="left:1544px;top:405px;width:220px;height:33px;background:#5cd65c"></div>
<div class="hl" style="left:442px;top:438px;width:1322px;background:#e6e6e6"></div>
<div class="hl" style="left:1544px;top:438px;width:220px;background:#c4eec4"></div>
<svg class="ic" style="left:457.95px;top:407.6px" width="26.2" height="26.2" viewBox="0 0 24 24"><path fill="#7d7d7d" d="M20 2H4c-1.1 0-2 .9-2 2v16c0 1.1.9 2 2 2h16c1.1 0 2-.9 2-2V4c0-1.1-.9-2-2-2zM8 20H4v-4h4v4zm0-6H4v-4h4v4zm0-6H4V4h4v4zm6 12h-4v-4h4v4zm0-6h-4v-4h4v4zm0-6h-4V4h4v4zm6 12h-4v-4h4v4zm0-6h-4v-4h4v4zm0-6h-4V4h4v4z"/></svg>
<div class="t" id="p7" style="left:536.3px;top:416.16px;font-size:12.8px;color:#3a3a3a;letter-spacing:-0.351px;">101</div>
<div class="t" id="n7" style="left:674.86px;top:416.16px;font-size:12.8px;color:#3a3a3a;letter-spacing:0.108px;">Gruppierte Liste</div>
<div class="t" id="v7" style="left:1334.59px;top:416.16px;font-size:12.8px;color:#3a3a3a;letter-spacing:0.13px;">ListeGruppiert_VM</div>
<div class="t" id="s7" style="left:1554.89px;top:416.16px;font-size:12.8px;color:#151515;letter-spacing:0.101px;">Aktiv</div>
<div class="abs" style="left:442px;top:439px;width:221px;height:33px;background:#f5f5f5"></div>
<div class="abs" style="left:1544px;top:439px;width:220px;height:33px;background:#5cd65c"></div>
<div class="hl" style="left:442px;top:472px;width:1322px;background:#e6e6e6"></div>
<svg class="ic" style="left:457.95px;top:441.6px" width="26.2" height="26.2" viewBox="0 0 24 24"><path fill="#7d7d7d" d="M20 2H4c-1.1 0-2 .9-2 2v16c0 1.1.9 2 2 2h16c1.1 0 2-.9 2-2V4c0-1.1-.9-2-2-2zM8 20H4v-4h4v4zm0-6H4v-4h4v4zm0-6H4V4h4v4zm6 12h-4v-4h4v4zm0-6h-4v-4h4v4zm0-6h-4V4h4v4zm6 12h-4v-4h4v4zm0-6h-4v-4h4v4zm0-6h-4V4h4v4z"/></svg>
<div class="t" id="p8" style="left:536.3px;top:450.16px;font-size:12.8px;color:#3a3a3a;letter-spacing:0.108px;">999</div>
<div class="t" id="n8" style="left:674.86px;top:450.16px;font-size:12.8px;color:#3a3a3a;letter-spacing:0.009px;">Unikum_Urknall</div>
<div class="t" id="v8" style="left:1334.59px;top:450.16px;font-size:12.8px;color:#3a3a3a;letter-spacing:-0.027px;">Urknall_VM</div>
<div class="t" id="s8" style="left:1554.89px;top:450.16px;font-size:12.8px;color:#151515;letter-spacing:0.101px;">Aktiv</div>
<div class="vl" style="left:663px;top:167px;height:456px"></div>
<div class="box" style="left:11px;top:288px;width:419px;height:296px"></div>
<div class="box" style="left:437px;top:0px;width:893px;height:43px"></div>
<div class="box" style="left:437px;top:48px;width:1351px;height:42px"></div>
<div class="box" style="left:437px;top:94px;width:1350px;height:490px"></div>
<div class="badge" style="left:36.85px;top:415.75px">a</div>
<div class="badge" style="left:1247.05px;top:0.6px">b</div>
<div class="badge" style="left:1247.05px;top:49.3px">c</div>
<div class="badge" style="left:1247.05px;top:290.95px">d</div>
</div></body></html>
